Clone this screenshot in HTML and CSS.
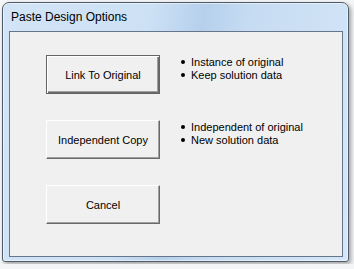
FILE: index.html
```html
<!DOCTYPE html>
<html>
<head>
    <title>Paste Design Options</title>
    <link rel="stylesheet" href="styles.css">
</head>
<body>
    <div class="window">
        <div class="titlebar">Paste Design Options</div>
        <div class="client">
            <div class="row">
                <button class="btn default">Link To Original</button>
                <ul class="notes">
                    <li>Instance of original</li>
                    <li>Keep solution data</li>
                </ul>
            </div>
            <div class="row">
                <button class="btn">Independent Copy</button>
                <ul class="notes">
                    <li>Independent of original</li>
                    <li>New solution data</li>
                </ul>
            </div>
            <div class="row">
                <button class="btn">Cancel</button>
            </div>
        </div>
    </div>
</body>
</html>
```

FILE: styles.css
```css
body {
    margin: 0;
    padding: 2px;
    background: #f4f5f6;
    font-family: "Liberation Sans", Arial, sans-serif;
}
.window {
    width: 334px;
    height: 254px;
    border: 1px solid #4f5b68;
    border-radius: 7px 7px 3px 3px;
    padding: 0 5px 4px 6px;
    background: linear-gradient(100deg, #d2e4f6 0%, #cde1f5 38%, #b6d0ec 52%, #c6dcf2 64%, #d5e6f8 100%);
    box-shadow: inset 0 0 0 1px rgba(255, 255, 255, 0.5), 2px 2px 4px rgba(0, 0, 0, 0.35);
    display: flex;
    flex-direction: column;
}
.titlebar {
    height: 28px;
    line-height: 28px;
    padding-left: 2px;
    font-size: 12px;
    color: #000;
}
.client {
    flex: 1;
    border: 1px solid #66768a;
    background: #f0f0f0;
    padding: 23px 0 0 36px;
    display: flex;
    flex-direction: column;
    gap: 26px;
}
.row {
    display: flex;
    align-items: flex-start;
}
.btn {
    width: 114px;
    height: 39px;
    margin: 0;
    padding: 0;
    font-family: "Liberation Sans", Arial, sans-serif;
    font-size: 11px;
    color: #000;
    background: #f0f0f0;
    border: 1px solid;
    border-color: #fff #696969 #696969 #fff;
    box-shadow: inset -1px -1px #a0a0a0;
}
.btn.default {
    border-color: #646464;
    box-shadow: inset 1px 1px #fff, inset -1px -1px #696969, inset -2px -2px #a0a0a0;
}
.notes {
    list-style: none;
    margin: 1px 0 0 21px;
    padding: 0;
    font-size: 11px;
    line-height: 13px;
    color: #000;
}
.notes li::before {
    content: "";
    display: inline-block;
    width: 4px;
    height: 4px;
    border-radius: 50%;
    background: #000;
    margin-right: 6px;
    vertical-align: 2px;
}
```
